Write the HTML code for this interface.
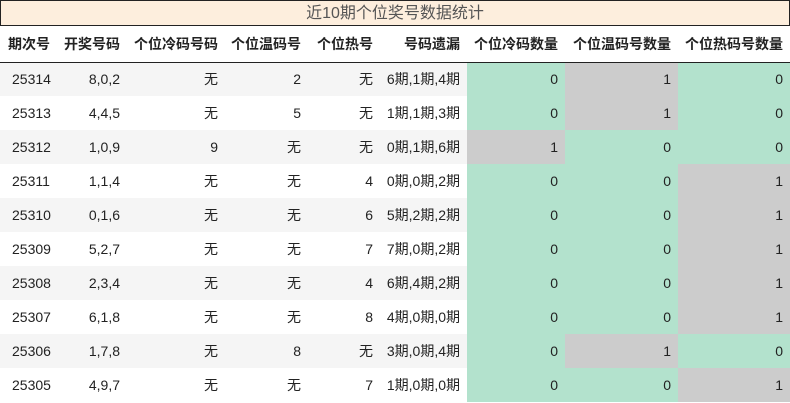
<!DOCTYPE html><html><head><meta charset="utf-8"><style>
*{margin:0;padding:0;box-sizing:border-box}
body{width:790px;height:403px;background:#fff;font-family:"Liberation Sans","Noto Sans CJK SC",sans-serif;color:#222;overflow:hidden;position:relative}
.t{position:absolute;left:0;top:0;width:790px;height:26px;border:1px solid #222;background:#fdeedd;color:#555;font-size:16px;text-align:center;line-height:25px}
table{position:absolute;left:0;top:26px;border-collapse:collapse;table-layout:fixed;width:790px}
th{height:36px;font-size:14px;font-weight:bold;text-align:right;padding-right:7px;border-bottom:1px solid #222;white-space:nowrap}
th:first-child{text-align:left;padding-left:8px}
td{height:34px;font-size:14px;text-align:right;padding-right:7px;white-space:nowrap}
td:first-child{text-align:left;padding-left:12px}
tr.g td{background:#f5f5f5}
tr td.G{background:#b3e2cd}
tr td.S{background:#cccccc}
</style></head><body>
<div class="t">近10期个位奖号数据统计</div>
<table>
<colgroup><col style="width:58px"><col style="width:69px"><col style="width:98px"><col style="width:83px"><col style="width:72px"><col style="width:87px"><col style="width:98px"><col style="width:113px"><col style="width:112px"></colgroup>
<tr><th>期次号</th><th>开奖号码</th><th>个位冷码号码</th><th>个位温码号</th><th>个位热号</th><th>号码遗漏</th><th>个位冷码数量</th><th>个位温码号数量</th><th>个位热码号数量</th></tr>
<tr class="g"><td>25314</td><td>8,0,2</td><td>无</td><td>2</td><td>无</td><td>6期,1期,4期</td><td class="G">0</td><td class="S">1</td><td class="G">0</td></tr>
<tr><td>25313</td><td>4,4,5</td><td>无</td><td>5</td><td>无</td><td>1期,1期,3期</td><td class="G">0</td><td class="S">1</td><td class="G">0</td></tr>
<tr class="g"><td>25312</td><td>1,0,9</td><td>9</td><td>无</td><td>无</td><td>0期,1期,6期</td><td class="S">1</td><td class="G">0</td><td class="G">0</td></tr>
<tr><td>25311</td><td>1,1,4</td><td>无</td><td>无</td><td>4</td><td>0期,0期,2期</td><td class="G">0</td><td class="G">0</td><td class="S">1</td></tr>
<tr class="g"><td>25310</td><td>0,1,6</td><td>无</td><td>无</td><td>6</td><td>5期,2期,2期</td><td class="G">0</td><td class="G">0</td><td class="S">1</td></tr>
<tr><td>25309</td><td>5,2,7</td><td>无</td><td>无</td><td>7</td><td>7期,0期,2期</td><td class="G">0</td><td class="G">0</td><td class="S">1</td></tr>
<tr class="g"><td>25308</td><td>2,3,4</td><td>无</td><td>无</td><td>4</td><td>6期,4期,2期</td><td class="G">0</td><td class="G">0</td><td class="S">1</td></tr>
<tr><td>25307</td><td>6,1,8</td><td>无</td><td>无</td><td>8</td><td>4期,0期,0期</td><td class="G">0</td><td class="G">0</td><td class="S">1</td></tr>
<tr class="g"><td>25306</td><td>1,7,8</td><td>无</td><td>8</td><td>无</td><td>3期,0期,4期</td><td class="G">0</td><td class="S">1</td><td class="G">0</td></tr>
<tr><td>25305</td><td>4,9,7</td><td>无</td><td>无</td><td>7</td><td>1期,0期,0期</td><td class="G">0</td><td class="G">0</td><td class="S">1</td></tr>
</table>
</body></html>
